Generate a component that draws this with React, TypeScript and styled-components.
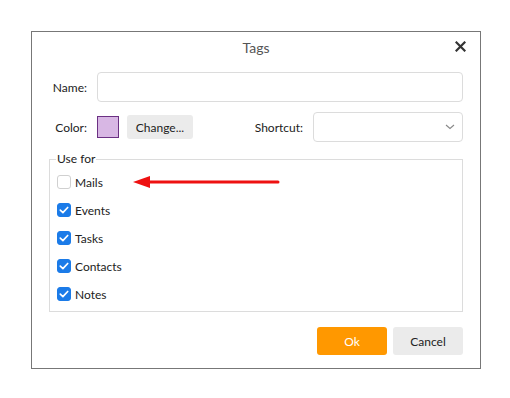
import React from "react";
import styled, { createGlobalStyle } from "styled-components";

const Global = createGlobalStyle`
  html, body { margin: 0; padding: 0; background: #fff; }
  body { font-family: "Segoe UI", "Lato", "Noto Sans", sans-serif; font-size: 12px; color: #222; }
  * { box-sizing: border-box; }
`;

const Page = styled.div`
  padding: 31px 0 0 31px;
`;

const Dialog = styled.div`
  width: 450px;
  height: 338px;
  border: 1px solid #777;
  background: #fff;
  display: flex;
  flex-direction: column;
  padding: 0 17px 13px 17px;
`;

const Header = styled.div`
  position: relative;
  height: 30px;
  display: flex;
  align-items: center;
  justify-content: center;
`;

const Title = styled.div`
  font-size: 14px;
  color: #555;
`;

const Close = styled.button`
  position: absolute;
  right: -3px;
  top: 9px;
  width: 11px;
  height: 11px;
  padding: 0;
  border: 0;
  background: none;
  display: flex;
  align-items: center;
  justify-content: center;
`;

const Form = styled.div`
  margin-top: 10px;
  display: flex;
  flex-direction: column;
  gap: 10px;
`;

const Row = styled.div`
  display: flex;
  align-items: center;
  height: 30px;
`;

const Label = styled.label<{ $w: number }>`
  width: ${(p) => p.$w}px;
  text-align: right;
  margin-right: 10px;
  color: #222;
  flex-shrink: 0;
`;

const TextInput = styled.input`
  flex: 1;
  height: 30px;
  border: 1px solid #dcdcdc;
  border-radius: 4px;
  outline: none;
  font: inherit;
  padding: 0 8px;
`;

const Swatch = styled.div<{ $color: string }>`
  width: 22px;
  height: 22px;
  background: ${(p) => p.$color};
  border: 1px solid #6b3083;
  margin-right: 8px;
`;

const GrayButton = styled.button<{ $w: number; $h: number }>`
  width: ${(p) => p.$w}px;
  height: ${(p) => p.$h}px;
  background: #ebebeb;
  border: 0;
  border-radius: 3px;
  font: inherit;
  color: #222;
  padding: 0;
`;

const Spacer = styled.div`
  flex: 1;
`;

const SelectBox = styled.div`
  width: 150px;
  height: 30px;
  border: 1px solid #dcdcdc;
  border-radius: 4px;
  display: flex;
  align-items: center;
  justify-content: flex-end;
  padding-right: 7px;
`;

const Fieldset = styled.fieldset`
  margin: 9px 0 0 0;
  padding: 1px 0 0 7px;
  border: 1px solid #dcdcdc;
  height: 161px;
  min-width: 0;
`;

const Legend = styled.legend`
  padding: 0 1px;
  margin-left: -1px;
  color: #222;
  line-height: 16px;
`;

const CheckRow = styled.label`
  position: relative;
  display: flex;
  align-items: center;
  height: 28px;
  gap: 4px;
`;

const Box = styled.span<{ $checked: boolean }>`
  width: 14px;
  height: 14px;
  border-radius: 3px;
  border: 1px solid ${(p) => (p.$checked ? "#1b7be8" : "#d0d0d0")};
  background: ${(p) => (p.$checked ? "#1b7be8" : "#fff")};
  display: flex;
  align-items: center;
  justify-content: center;
  flex-shrink: 0;
`;

const Arrow = styled.svg`
  position: absolute;
  left: 76px;
  top: 7px;
`;

const Footer = styled.div`
  margin-top: auto;
  display: flex;
  justify-content: flex-end;
  gap: 6px;
`;

const OkButton = styled.button`
  width: 70px;
  height: 28px;
  background: #ff9800;
  color: #fff;
  border: 0;
  border-radius: 3px;
  font: inherit;
`;

const items = [
  { label: "Mails", checked: false },
  { label: "Events", checked: true },
  { label: "Tasks", checked: true },
  { label: "Contacts", checked: true },
  { label: "Notes", checked: true },
];

export default function App() {
  return (
    <>
      <Global />
      <Page>
        <Dialog>
          <Header>
            <Title>Tags</Title>
            <Close aria-label="Close">
              <svg width="11" height="11" viewBox="0 0 11 11">
                <path d="M1.5 1.5 L9.5 9.5 M9.5 1.5 L1.5 9.5" stroke="#333" strokeWidth="2.2" strokeLinecap="square" />
              </svg>
            </Close>
          </Header>
          <Form>
            <Row>
              <Label $w={38}>Name:</Label>
              <TextInput />
            </Row>
            <Row>
              <Label $w={38}>Color:</Label>
              <Swatch $color="#d8b7e4" />
              <GrayButton $w={66} $h={24}>Change...</GrayButton>
              <Spacer />
              <Label $w={70}>Shortcut:</Label>
              <SelectBox>
                <svg width="10" height="6" viewBox="0 0 10 6">
                  <path d="M1 1 L5 4.5 L9 1" fill="none" stroke="#888" strokeWidth="1.1" />
                </svg>
              </SelectBox>
            </Row>
          </Form>
          <Fieldset>
            <Legend>Use for</Legend>
            {items.map((it) => (
              <CheckRow key={it.label}>
                <Box $checked={it.checked}>
                  {it.checked && (
                    <svg width="10" height="8" viewBox="0 0 10 8">
                      <path d="M1.3 4.2 L3.9 6.6 L8.7 1.5" fill="none" stroke="#fff" strokeWidth="1.7" strokeLinecap="round" strokeLinejoin="round" />
                    </svg>
                  )}
                </Box>
                {it.label}
                {it.label === "Mails" && (
                  <Arrow width="148" height="14" viewBox="0 0 148 14">
                    <path d="M16 7 H145" stroke="#ee1111" strokeWidth="3" strokeLinecap="round" />
                    <path d="M0 7 L17 1 L17 13 Z" fill="#ee1111" />
                  </Arrow>
                )}
              </CheckRow>
            ))}
          </Fieldset>
          <Footer>
            <OkButton>Ok</OkButton>
            <GrayButton $w={70} $h={28}>Cancel</GrayButton>
          </Footer>
        </Dialog>
      </Page>
    </>
  );
}
